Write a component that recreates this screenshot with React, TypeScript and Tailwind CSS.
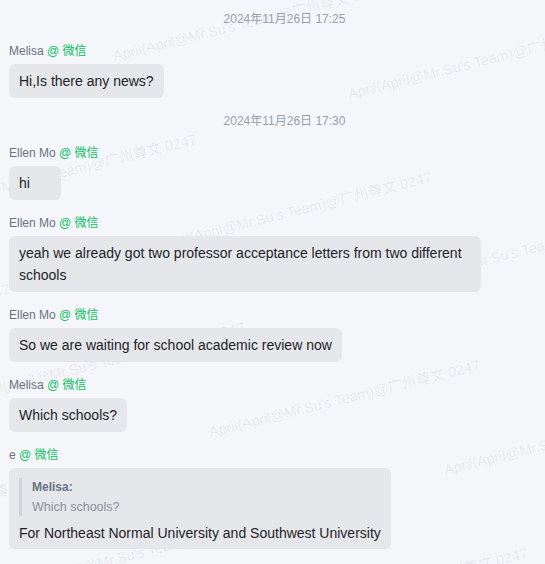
import React from "react";

const FONT = "font-['Liberation_Sans','Noto_Sans_CJK_SC',sans-serif]";

function Stamp({ text, mt }: { text: string; mt: string }) {
  return (
    <div className={`${mt} w-full self-stretch pl-[24px] text-center text-[12px] leading-[18px] text-[#9aa0a8]`}>
      {text}
    </div>
  );
}

function Name({ name }: { name: string }) {
  return (
    <div className="mt-[14px] h-[18px] whitespace-nowrap text-[12px] leading-[18px] text-[#6b7280]">
      {name} <span className="text-[#07c160]">@ 微信</span>
    </div>
  );
}

function Bubble({ children, extra = "" }: { children: React.ReactNode; extra?: string }) {
  return (
    <div
      className={`mt-[4px] max-w-[472px] rounded-[6px] bg-[#e5e7eb] px-[10px] py-[6px] text-[14px] leading-[22px] text-[#1f2328] ${extra}`}
    >
      {children}
    </div>
  );
}

function Watermarks() {
  const marks: { x: number; y: number; k: string }[] = [];
  for (let i = -3; i <= 3; i++) {
    for (let j = -2; j <= 3; j++) {
      const x = 163 + i * 235 + j * 48;
      const y = 249 + i * 38 + j * 188;
      if (x < -320 || x > 560 || y < -30 || y > 660) continue;
      marks.push({ x, y, k: `${i}_${j}` });
    }
  }
  return (
    <div className="pointer-events-none absolute inset-0 overflow-hidden">
      {marks.map((m) => (
        <span
          key={m.k}
          className="absolute origin-bottom-left rotate-[-14deg] whitespace-nowrap text-[14.5px] leading-[14px] text-black/[0.07]"
          style={{ left: m.x, top: m.y - 12 }}
        >
          April(April@Mr.Su's Team)@广州尊文 0247
        </span>
      ))}
    </div>
  );
}

export default function App() {
  return (
    <div className={`relative h-[564px] w-full overflow-hidden bg-[#f5f6fa] ${FONT}`}>
      <Watermarks />
      <div className="relative flex flex-col items-start px-[9px] pt-[10px]">
        <Stamp text="2024年11月26日 17:25" mt="mt-0" />
        <Name name="Melisa" />
        <Bubble>Hi,Is there any news?</Bubble>
        <Stamp text="2024年11月26日 17:30" mt="mt-[14px]" />
        <Name name="Ellen Mo" />
        <Bubble extra="min-w-[52px]">hi</Bubble>
        <Name name="Ellen Mo" />
        <Bubble>yeah we already got two professor acceptance letters from two different schools</Bubble>
        <Name name="Ellen Mo" />
        <Bubble>So we are waiting for school academic review now</Bubble>
        <Name name="Melisa" />
        <Bubble>Which schools?</Bubble>
        <Name name="e" />
        <div className="mt-[4px] max-w-[472px] rounded-[6px] bg-[#e5e7eb] px-[10px] pb-[5px] pt-[10px] text-[14px] text-[#1f2328]">
          <div className="border-l-[3px] border-[#d1d5db] pl-[10px]">
            <div className="text-[12px] font-bold leading-[18px] text-[#6b7280]">Melisa:</div>
            <div className="mt-[2px] text-[12.5px] leading-[18px] text-[#8b9099]">Which schools?</div>
          </div>
          <div className="mt-[6px] leading-[22px]">For Northeast Normal University and Southwest University</div>
        </div>
      </div>
    </div>
  );
}
